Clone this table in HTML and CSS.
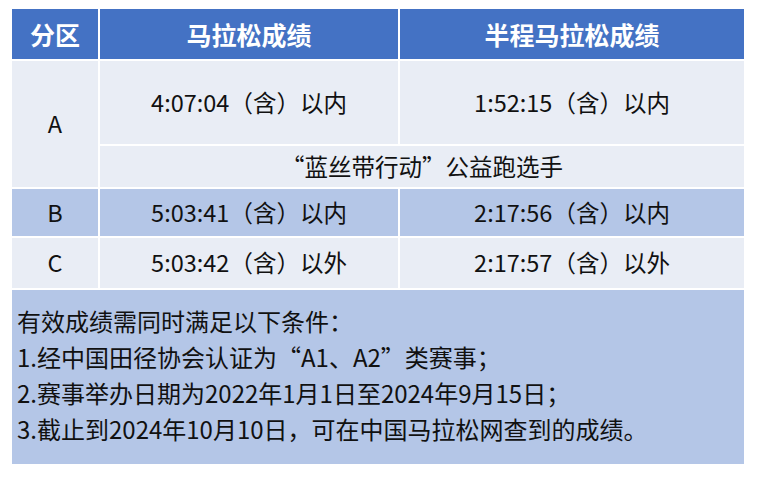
FILE: index.html
```html
<!DOCTYPE html>
<html lang="zh-CN">
<head>
<meta charset="utf-8">
<link rel="stylesheet" href="styles.css">
</head>
<body>
<div class="sheet">
  <div class="cell head">分区</div>
  <div class="cell head">马拉松成绩</div>
  <div class="cell head">半程马拉松成绩</div>

  <div class="cell light zone-a">A</div>
  <div class="cell light row-a1">4:07:04（含）以内</div>
  <div class="cell light row-a1">1:52:15（含）以内</div>
  <div class="cell light row-a2 span2">“蓝丝带行动”公益跑选手</div>

  <div class="cell dark row-b">B</div>
  <div class="cell dark row-b">5:03:41（含）以内</div>
  <div class="cell dark row-b">2:17:56（含）以内</div>

  <div class="cell light row-c">C</div>
  <div class="cell light row-c">5:03:42（含）以外</div>
  <div class="cell light row-c">2:17:57（含）以外</div>

  <div class="notes">
    <p>有效成绩需同时满足以下条件：</p>
    <p>1.经中国田径协会认证为“A1、A2”类赛事；</p>
    <p>2.赛事举办日期为2022年1月1日至2024年9月15日；</p>
    <p>3.截止到2024年10月10日，可在中国马拉松网查到的成绩。</p>
  </div>
</div>
</body>
</html>
```

FILE: styles.css
```css
html, body {
  margin: 0;
  padding: 0;
  background: #ffffff;
}

body {
  padding: 9px 0 0 12px;
  font-family: "Noto Sans CJK SC", "Noto Sans", sans-serif;
  color: #111111;
}

.sheet {
  width: 732px;
  display: grid;
  grid-template-columns: 86px 298px 344px;
  grid-template-rows: 50px 83px 41px 47px 50px 174px;
  gap: 2px;
  background: #ffffff;
}

.cell {
  display: flex;
  align-items: center;
  justify-content: center;
  font-size: 23.5px;
  line-height: 1;
  white-space: nowrap;
}

.head {
  background: #4472c4;
  color: #ffffff;
  font-weight: 700;
  font-size: 25px;
}

.light {
  background: #e9edf5;
}

.dark {
  background: #b4c6e7;
}

.zone-a {
  grid-row: 2 / 4;
}

.span2 {
  grid-column: 2 / 4;
}

.notes {
  grid-column: 1 / 4;
  background: #b4c6e7;
  padding: 13px 0 0 5px;
  font-size: 24px;
  line-height: 36px;
}

.notes p {
  margin: 0;
  white-space: nowrap;
}
```
